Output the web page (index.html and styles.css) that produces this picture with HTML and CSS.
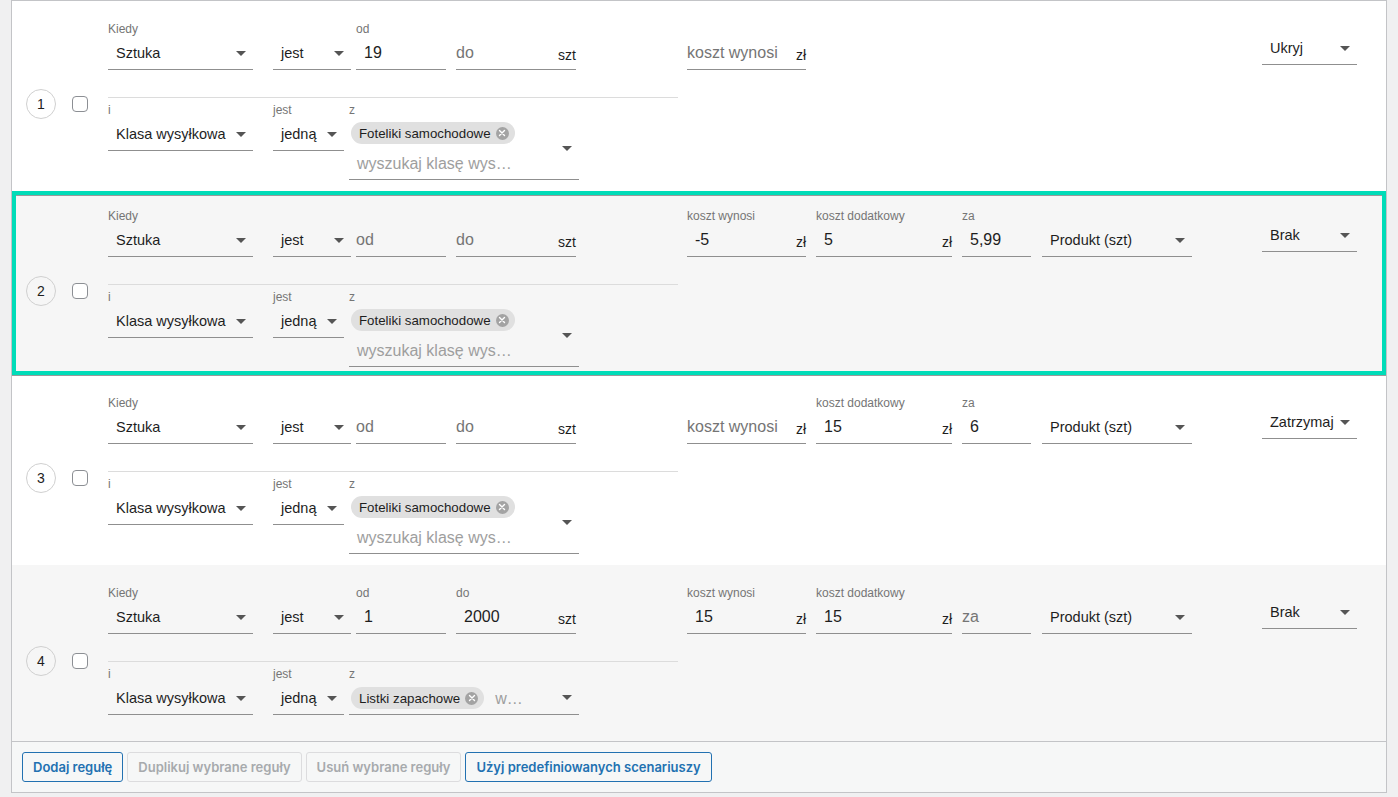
FILE: index.html
```html
<!DOCTYPE html>
<html lang="pl">
<head>
    <meta charset="UTF-8">
    <meta name="viewport" content="width=device-width, initial-scale=1.0">
    <title>Reguły kosztów wysyłki</title>
    <link rel="stylesheet" href="styles.css">
</head>
<body>
    <div class="rules">

        <!-- reguła 1 -->
        <div class="rule">
            <div class="rule-head">
                <span class="rule-num">1</span>
                <input type="checkbox" class="check">
            </div>
            <div class="rule-cond">
                <div class="cond-line">
                    <div class="field f-type"><span class="field-label">Kiedy</span><div class="select">Sztuka</div></div>
                    <div class="field f-op"><span class="field-label"></span><div class="select">jest</div></div>
                    <div class="field f-from"><span class="field-label">od</span><div class="input">19</div></div>
                    <div class="field f-to"><span class="field-label"></span><div class="input"><span class="ph">do</span><span class="unit">szt</span></div></div>
                </div>
                <div class="cond-line">
                    <div class="field f-type"><span class="field-label">i</span><div class="select">Klasa wysyłkowa</div></div>
                    <div class="field f-one"><span class="field-label">jest</span><div class="select">jedną</div></div>
                    <div class="field f-classes"><span class="field-label">z</span>
                        <div class="multi">
                            <div class="multi-items">
                                <span class="chip">Foteliki samochodowe <span class="chip-x"><svg width="8" height="8" viewBox="0 0 8 8"><path d="M1.5 1.5l5 5M6.5 1.5l-5 5" stroke="#fff" stroke-width="1.4" stroke-linecap="round"/></svg></span></span>
                                <span class="multi-input">wyszukaj klasę wys…</span>
                            </div>
                        </div>
                    </div>
                </div>
            </div>
            <div class="rule-cost">
                <div class="field f-cost"><span class="field-label"></span><div class="input"><span class="ph">koszt wynosi</span><span class="unit">zł</span></div></div>
            </div>
            <div class="rule-action">
                <div class="field f-action"><div class="select">Ukryj</div></div>
            </div>
        </div>

        <!-- reguła 2 -->
        <div class="rule grey active">
            <div class="rule-head">
                <span class="rule-num">2</span>
                <input type="checkbox" class="check">
            </div>
            <div class="rule-cond">
                <div class="cond-line">
                    <div class="field f-type"><span class="field-label">Kiedy</span><div class="select">Sztuka</div></div>
                    <div class="field f-op"><span class="field-label"></span><div class="select">jest</div></div>
                    <div class="field f-from"><span class="field-label"></span><div class="input"><span class="ph">od</span></div></div>
                    <div class="field f-to"><span class="field-label"></span><div class="input"><span class="ph">do</span><span class="unit">szt</span></div></div>
                </div>
                <div class="cond-line">
                    <div class="field f-type"><span class="field-label">i</span><div class="select">Klasa wysyłkowa</div></div>
                    <div class="field f-one"><span class="field-label">jest</span><div class="select">jedną</div></div>
                    <div class="field f-classes"><span class="field-label">z</span>
                        <div class="multi">
                            <div class="multi-items">
                                <span class="chip">Foteliki samochodowe <span class="chip-x"><svg width="8" height="8" viewBox="0 0 8 8"><path d="M1.5 1.5l5 5M6.5 1.5l-5 5" stroke="#fff" stroke-width="1.4" stroke-linecap="round"/></svg></span></span>
                                <span class="multi-input">wyszukaj klasę wys…</span>
                            </div>
                        </div>
                    </div>
                </div>
            </div>
            <div class="rule-cost">
                <div class="field f-cost"><span class="field-label">koszt wynosi</span><div class="input">-5<span class="unit">zł</span></div></div>
                <div class="field f-extra"><span class="field-label">koszt dodatkowy</span><div class="input">5<span class="unit">zł</span></div></div>
                <div class="field f-per"><span class="field-label">za</span><div class="input">5,99</div></div>
                <div class="field f-unit"><span class="field-label"></span><div class="select">Produkt (szt)</div></div>
            </div>
            <div class="rule-action">
                <div class="field f-action"><div class="select">Brak</div></div>
            </div>
        </div>

        <!-- reguła 3 -->
        <div class="rule">
            <div class="rule-head">
                <span class="rule-num">3</span>
                <input type="checkbox" class="check">
            </div>
            <div class="rule-cond">
                <div class="cond-line">
                    <div class="field f-type"><span class="field-label">Kiedy</span><div class="select">Sztuka</div></div>
                    <div class="field f-op"><span class="field-label"></span><div class="select">jest</div></div>
                    <div class="field f-from"><span class="field-label"></span><div class="input"><span class="ph">od</span></div></div>
                    <div class="field f-to"><span class="field-label"></span><div class="input"><span class="ph">do</span><span class="unit">szt</span></div></div>
                </div>
                <div class="cond-line">
                    <div class="field f-type"><span class="field-label">i</span><div class="select">Klasa wysyłkowa</div></div>
                    <div class="field f-one"><span class="field-label">jest</span><div class="select">jedną</div></div>
                    <div class="field f-classes"><span class="field-label">z</span>
                        <div class="multi">
                            <div class="multi-items">
                                <span class="chip">Foteliki samochodowe <span class="chip-x"><svg width="8" height="8" viewBox="0 0 8 8"><path d="M1.5 1.5l5 5M6.5 1.5l-5 5" stroke="#fff" stroke-width="1.4" stroke-linecap="round"/></svg></span></span>
                                <span class="multi-input">wyszukaj klasę wys…</span>
                            </div>
                        </div>
                    </div>
                </div>
            </div>
            <div class="rule-cost">
                <div class="field f-cost"><span class="field-label"></span><div class="input"><span class="ph">koszt wynosi</span><span class="unit">zł</span></div></div>
                <div class="field f-extra"><span class="field-label">koszt dodatkowy</span><div class="input">15<span class="unit">zł</span></div></div>
                <div class="field f-per"><span class="field-label">za</span><div class="input">6</div></div>
                <div class="field f-unit"><span class="field-label"></span><div class="select">Produkt (szt)</div></div>
            </div>
            <div class="rule-action">
                <div class="field f-action"><div class="select">Zatrzymaj</div></div>
            </div>
        </div>

        <!-- reguła 4 -->
        <div class="rule grey">
            <div class="rule-head">
                <span class="rule-num">4</span>
                <input type="checkbox" class="check">
            </div>
            <div class="rule-cond">
                <div class="cond-line">
                    <div class="field f-type"><span class="field-label">Kiedy</span><div class="select">Sztuka</div></div>
                    <div class="field f-op"><span class="field-label"></span><div class="select">jest</div></div>
                    <div class="field f-from"><span class="field-label">od</span><div class="input">1</div></div>
                    <div class="field f-to"><span class="field-label">do</span><div class="input">2000<span class="unit">szt</span></div></div>
                </div>
                <div class="cond-line">
                    <div class="field f-type"><span class="field-label">i</span><div class="select">Klasa wysyłkowa</div></div>
                    <div class="field f-one"><span class="field-label">jest</span><div class="select">jedną</div></div>
                    <div class="field f-classes"><span class="field-label">z</span>
                        <div class="multi">
                            <div class="multi-items">
                                <span class="chip">Listki zapachowe <span class="chip-x"><svg width="8" height="8" viewBox="0 0 8 8"><path d="M1.5 1.5l5 5M6.5 1.5l-5 5" stroke="#fff" stroke-width="1.4" stroke-linecap="round"/></svg></span></span>
                                <span class="multi-input short">w…</span>
                            </div>
                        </div>
                    </div>
                </div>
            </div>
            <div class="rule-cost">
                <div class="field f-cost"><span class="field-label">koszt wynosi</span><div class="input">15<span class="unit">zł</span></div></div>
                <div class="field f-extra"><span class="field-label">koszt dodatkowy</span><div class="input">15<span class="unit">zł</span></div></div>
                <div class="field f-per"><span class="field-label"></span><div class="input"><span class="ph">za</span></div></div>
                <div class="field f-unit"><span class="field-label"></span><div class="select">Produkt (szt)</div></div>
            </div>
            <div class="rule-action">
                <div class="field f-action"><div class="select">Brak</div></div>
            </div>
        </div>

        <div class="rules-footer">
            <button type="button" class="button">Dodaj regułę</button>
            <button type="button" class="button" disabled>Duplikuj wybrane reguły</button>
            <button type="button" class="button" disabled>Usuń wybrane reguły</button>
            <button type="button" class="button">Użyj predefiniowanych scenariuszy</button>
        </div>
    </div>
</body>
</html>
```

FILE: styles.css
```css
body {
    margin: 0;
    background-color: #f0f0f1;
    font-family: "Liberation Sans", Arial, sans-serif;
    color: #1e1e1e;
}
.rules {
    margin: 0 11px;
    border: 1px solid #c3c4c7;
    background: #fff;
}
.rule {
    display: flex;
    align-items: flex-start;
    padding: 20px 29px 11px 14px;
    background: #fff;
}
.rule.grey {
    background: #f6f6f6;
}
.rule.active {
    position: relative;
    border: 4px solid #00dcb8;
    padding: 13px 25px 4px 10px;
    box-shadow: inset 0 1px 0 #9a9a9a, 0 1px 0 #9a9a9a;
}
.rule-head {
    display: flex;
    align-items: center;
    gap: 16px;
    align-self: center;
    margin-top: 7px;
}
.rule-num {
    width: 30px;
    height: 30px;
    border: 1px solid #d0d0d0;
    border-radius: 50%;
    display: flex;
    align-items: center;
    justify-content: center;
    font-size: 14px;
    box-sizing: border-box;
}
.check {
    appearance: none;
    width: 16px;
    height: 16px;
    margin: 0;
    border: 1px solid #8c8f94;
    border-radius: 4px;
    background: #fff;
}
.rule-cond {
    width: 570px;
    min-height: 145px;
    margin-left: 20px;
}
.cond-line {
    display: flex;
    align-items: flex-start;
}
.cond-line + .cond-line {
    margin-top: 27px;
    padding-top: 4px;
    border-top: 1px solid #dcdcdc;
}
.rule-cost {
    display: flex;
    margin-left: 9px;
}
.rule-action {
    margin-left: auto;
    margin-top: 11px;
}

/* pola */
.field {
    display: flex;
    flex-direction: column;
}
.field-label {
    display: block;
    height: 16px;
    line-height: 16px;
    font-size: 12px;
    color: #757575;
}
.f-type { width: 145px; margin-right: 20px; }
.f-op { width: 78px; margin-right: 5px; }
.f-one { width: 71px; margin-right: 5px; }
.f-from { width: 90px; margin-right: 10px; }
.f-to { width: 120px; }
.f-classes { width: 230px; }
.f-cost { width: 119px; margin-right: 10px; }
.f-extra { width: 136px; margin-right: 10px; }
.f-per { width: 69px; margin-right: 11px; }
.f-unit { width: 150px; }
.f-action { width: 95px; }

.input,
.select {
    height: 33px;
    box-sizing: border-box;
    border-bottom: 1px solid #8f8f8f;
    display: flex;
    align-items: center;
    white-space: nowrap;
}
.input {
    padding: 0 0 0 8px;
    font-size: 16px;
}
.select {
    padding: 0 7px 0 8px;
    font-size: 14.5px;
}
.select::after,
.multi::after {
    content: "";
    margin-left: auto;
    border-left: 5px solid transparent;
    border-right: 5px solid transparent;
    border-top: 5px solid #555;
}
.ph {
    margin-left: -8px;
    color: #757575;
}
.unit {
    margin-left: auto;
    padding-top: 3px;
    font-size: 14px;
}

/* wybór klas */
.multi {
    position: relative;
    min-height: 33px;
    box-sizing: border-box;
    border-bottom: 1px solid #8f8f8f;
    padding: 0 28px 0 2px;
    display: flex;
    align-items: center;
}
.multi::after {
    position: absolute;
    right: 7px;
    top: 50%;
    margin-top: -3px;
}
.multi-items {
    display: flex;
    flex-wrap: wrap;
    align-items: center;
}
.chip {
    display: inline-flex;
    align-items: center;
    gap: 5px;
    height: 22px;
    margin: 4px 4px 4px 0;
    padding: 0 6px 0 8px;
    border-radius: 11px;
    background: #e0e0e0;
    font-size: 13.3px;
}
.chip-x {
    width: 13px;
    height: 13px;
    border-radius: 50%;
    background: #a3a3a3;
    display: flex;
    align-items: center;
    justify-content: center;
}
.multi-input {
    width: 166px;
    height: 31px;
    line-height: 31px;
    box-sizing: border-box;
    padding-left: 6px;
    font-size: 16px;
    color: #9e9e9e;
    white-space: nowrap;
}
.multi-input.short {
    width: 34px;
    padding-left: 7px;
}

/* przyciski */
.rules-footer {
    display: flex;
    gap: 4px;
    padding: 10px;
    border-top: 1px solid #c3c4c7;
    background: #f6f7f7;
}
.button {
    height: 30px;
    padding: 0 10px;
    font-family: Inter, "Liberation Sans", sans-serif;
    font-size: 13px;
    font-weight: 600;
    color: #2271b1;
    background: #f6f7f7;
    border: 1px solid #2271b1;
    border-radius: 3px;
    cursor: pointer;
}
.button:disabled {
    color: #a7aaad;
    border-color: #dcdcde;
    cursor: default;
}
```
